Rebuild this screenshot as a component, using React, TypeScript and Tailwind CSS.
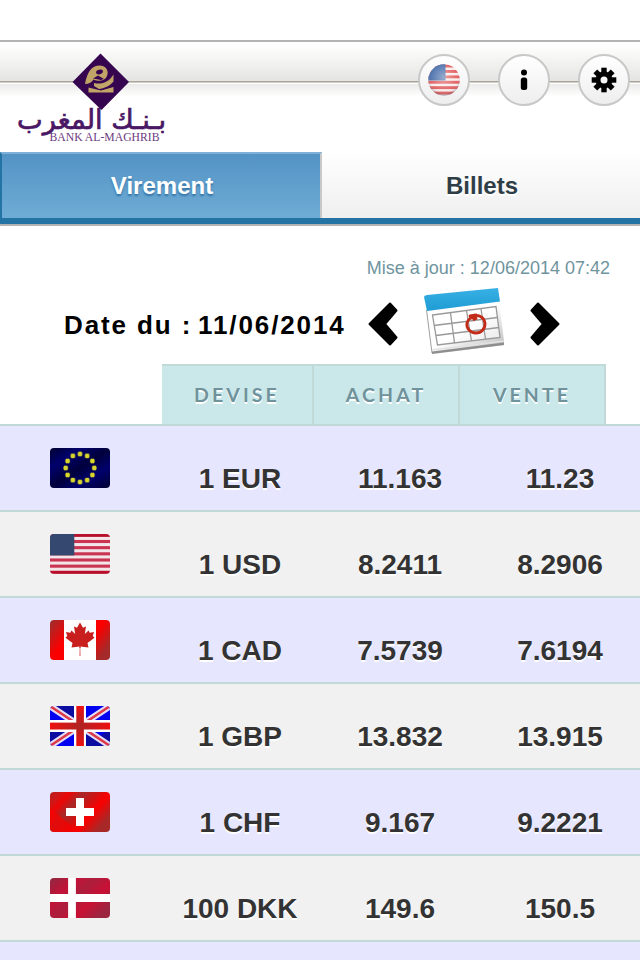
import type { ReactNode } from "react";

type Rate = {
  code: string;
  buy: string;
  sell: string;
  flag: ReactNode;
};

/* étoiles du drapeau européen, réparties sur une ellipse */
const stars = Array.from({ length: 12 }, (_, i) => {
  const a = (i * Math.PI) / 6;
  return { x: 30 + Math.sin(a) * 14.3, y: 20 - Math.cos(a) * 14 };
});

const EuFlag = () => (
  <>
    <defs>
      <linearGradient id="eu" x1="0" y1="0" x2="1" y2="1">
        <stop offset="0" stopColor="#000030" />
        <stop offset="0.25" stopColor="#00006c" />
        <stop offset="0.5" stopColor="#00003c" />
        <stop offset="0.72" stopColor="#00006c" />
        <stop offset="1" stopColor="#000030" />
      </linearGradient>
    </defs>
    <rect width="60" height="40" fill="url(#eu)" />
    {stars.map((s, i) => (
      <g key={i} fill="#d8d62c">
        <rect x={s.x - 2.5} y={s.y - 1.5} width="5" height="3" opacity="0.7" />
        <rect x={s.x - 1.7} y={s.y - 2.3} width="3.4" height="4.6" />
      </g>
    ))}
  </>
);

const UsFlag = () => (
  <>
    <rect width="60" height="40" fill="#f3e6ea" />
    {[0, 1, 2, 3, 4, 5, 6].map((i) => (
      <rect key={i} y={i * 6.16 - 0.2} width="60" height="3.1" fill={i % 6 ? "#c93452" : "#b8102c"} />
    ))}
    <rect width="24.3" height="21.4" fill="#35486f" />
  </>
);

const CaFlag = () => (
  <>
    <defs>
      <linearGradient id="ca1" x1="0" y1="0" x2="0.5" y2="1">
        <stop offset="0.1" stopColor="#a52a2a" />
        <stop offset="0.8" stopColor="#fa0000" />
      </linearGradient>
      <linearGradient id="ca2" x1="0.2" y1="0" x2="0.7" y2="1">
        <stop offset="0.2" stopColor="#fa0000" />
        <stop offset="0.8" stopColor="#a52a2a" />
      </linearGradient>
    </defs>
    <rect width="60" height="40" fill="#fff" />
    <rect width="14" height="40" fill="url(#ca1)" />
    <rect x="46" width="14" height="40" fill="url(#ca2)" />
    <path
      d="M30 2.5L33 7.8L36 6.5L34.8 14L38.5 10.5L39.7 12.8L44 12L42.8 16L44.5 17.7L37.5 23L38.5 27.5L30.6 26.5L31 36H29L29.4 26.5L21.5 27.5L22.5 23L15.5 17.7L17.2 16L16 12L20.3 12.8L21.5 10.5L25.2 14L24 6.5L27 7.8Z"
      fill="#c81e1e"
    />
    <rect x="28.5" y="28" width="3" height="8" fill="#fff" opacity="0.6" />
  </>
);

const GbFlag = () => (
  <>
    <defs>
      <linearGradient id="gbh">
        <stop offset="0" stopColor="#ee1010" />
        <stop offset="0.5" stopColor="#b02424" />
        <stop offset="1" stopColor="#ee1010" />
      </linearGradient>
      <linearGradient id="gbv" x2="0" y2="1">
        <stop offset="0" stopColor="#ee1010" />
        <stop offset="0.5" stopColor="#b02424" />
        <stop offset="1" stopColor="#ee1010" />
      </linearGradient>
    </defs>
    <rect width="60" height="40" fill="#0000f0" />
    <path d="M0 0H30V14H20ZM60 40H30V26H40ZM0 40V23H24ZM60 23V40H36Z" fill="#0c0ca0" />
    <path d="M0 40H26V24ZM34 16L60 0V16Z" fill="#0000f0" />
    <path d="M0 0L60 40M60 0L0 40" stroke="#e4dcf4" strokeWidth="6.5" />
    <path d="M0 0L60 40M60 0L0 40" stroke="#dc3848" strokeWidth="2.4" />
    <path d="M30 0V40M0 20H60" stroke="#fff" strokeWidth="12" />
    <rect x="26.3" width="7.6" height="40" fill="url(#gbv)" />
    <rect y="16.6" width="60" height="6.9" fill="url(#gbh)" />
  </>
);

const ChFlag = () => (
  <>
    <defs>
      <linearGradient id="ch" x1="0" y1="0" x2="1" y2="0.6">
        <stop offset="0" stopColor="#b82020" />
        <stop offset="0.15" stopColor="#d01616" />
        <stop offset="0.25" stopColor="#ec0606" />
        <stop offset="0.42" stopColor="#a82828" />
        <stop offset="0.6" stopColor="#d01212" />
        <stop offset="0.75" stopColor="#fa0000" />
        <stop offset="1" stopColor="#a82828" />
      </linearGradient>
    </defs>
    <rect width="60" height="40" fill="url(#ch)" />
    <path d="M0 16V40H32L22 34Z" fill="#f80000" opacity="0.7" />
    <path d="M26 6H34V16H44V24H34V34H26V24H16V16H26Z" fill="#fff" />
  </>
);

const DkFlag = () => (
  <>
    <defs>
      <linearGradient id="dk" x1="0" y1="0" x2="1" y2="0.7">
        <stop offset="0" stopColor="#8e2840" />
        <stop offset="0.3" stopColor="#c41238" />
        <stop offset="0.5" stopColor="#ac1e3c" />
        <stop offset="0.75" stopColor="#c81034" />
        <stop offset="1" stopColor="#9c2640" />
      </linearGradient>
    </defs>
    <rect width="60" height="40" fill="url(#dk)" />
    <path d="M22 0V40M0 20H60" stroke="#fff" strokeWidth="7.8" />
  </>
);

const rates: Rate[] = [
  { code: "1 EUR", buy: "11.163", sell: "11.23", flag: <EuFlag /> },
  { code: "1 USD", buy: "8.2411", sell: "8.2906", flag: <UsFlag /> },
  { code: "1 CAD", buy: "7.5739", sell: "7.6194", flag: <CaFlag /> },
  { code: "1 GBP", buy: "13.832", sell: "13.915", flag: <GbFlag /> },
  { code: "1 CHF", buy: "9.167", sell: "9.2221", flag: <ChFlag /> },
  { code: "100 DKK", buy: "149.6", sell: "150.5", flag: <DkFlag /> },
];

function Logo() {
  return (
    <svg width="180" height="110" viewBox="0 42 180 110" className="shrink-0 overflow-visible">
      <path d="M100.5 53.5L129 82L101.5 110L72.5 82Z" fill="#36054f" />
      {/* monogramme doré */}
      <path
        d="M85 84C87 74 90 66 99 65.500C107 65.500 109.500 72 106.500 77C104 81 98 82 93.500 79.500C92 82 89 84 85 84Z"
        fill="#c0a468"
      />
      <ellipse cx="99.500" cy="72" rx="3.500" ry="2.200" fill="#36054f" transform="rotate(-15 99.500 72)" />
      <path d="M93 78.500L98 75.500L104 79L101 80Z" fill="#36054f" />
      <path d="M94 83C102 85 109 82 113.500 74.500V81.500C110 86 104 88.500 99 89L94 86Z" fill="#c0a468" />
      <path d="M88.500 87.500L101 90.500L113.500 87V92.500H88.500Z" fill="#c0a468" />
      <text
        x="17"
        y="129"
        textLength="149"
        lengthAdjust="spacingAndGlyphs"
        direction="ltr"
        fontSize="27"
        fill="#4a1765"
        stroke="#4a1765"
        strokeWidth="0.7"
        className="font-['DejaVu_Sans',sans-serif]"
      >
        بـنـك المغرب
      </text>
      <text
        x="49.500"
        y="141"
        textLength="110"
        lengthAdjust="spacingAndGlyphs"
        fontSize="13.500"
        fill="#6b3a80"
        className="font-['Liberation_Serif',serif]"
      >
        BANK AL-MAGHRIB
      </text>
    </svg>
  );
}

function RoundButton({ label, children }: { label: string; children: ReactNode }) {
  return (
    <button
      aria-label={label}
      className="flex size-[52px] items-center justify-center rounded-full border-2 border-[#c8c8c8] bg-linear-to-b from-white to-[#eeeeee]"
    >
      {children}
    </button>
  );
}

function RoundFlag() {
  return (
    <svg width="32" height="32" viewBox="0 0 32 32">
      <defs>
        <clipPath id="disc">
          <circle cx="16" cy="16" r="15.700" />
        </clipPath>
        <radialGradient id="shine" cx="0.5" cy="0.42" r="0.58">
          <stop offset="0" stopColor="#fff" stopOpacity="0.45" />
          <stop offset="0.75" stopColor="#fff" stopOpacity="0.1" />
          <stop offset="1" stopColor="#3c3c50" stopOpacity="0.45" />
        </radialGradient>
      </defs>
      <g clipPath="url(#disc)">
        <rect width="32" height="32" fill="#f6ecea" />
        {[0, 1, 2, 3, 4, 5].map((i) => (
          <rect key={i} y={i * 5.4 + 0.6} width="32" height="2.900" fill="#df5254" />
        ))}
        <rect width="17.500" height="16.500" fill="#3f66a6" />
        <rect width="32" height="32" fill="url(#shine)" />
      </g>
    </svg>
  );
}

function Calendar() {
  return (
    <svg width="80" height="66" viewBox="0 0 80 66">
      <defs>
        <linearGradient id="paper" x1="0" y1="0" x2="1" y2="1">
          <stop offset="0.5" stopColor="#fff" />
          <stop offset="1" stopColor="#b4b4b4" />
        </linearGradient>
        <linearGradient id="band" x2="0" y2="1">
          <stop offset="0" stopColor="#38b0e4" />
          <stop offset="1" stopColor="#1e9cd4" />
        </linearGradient>
      </defs>
      <path d="M2 22L75 13L80 53V57L8 66Z" fill="url(#paper)" />
      <path d="M2.500 22L8 65" stroke="#a0a0a0" fill="none" />
      <path d="M8 63.500L80 54.500V57L8 66Z" fill="#8e8e8e" />
      <path d="M8 62L80 53" stroke="#e2e2e2" strokeWidth="1.500" />
      <path d="M0 9Q0 7.500 3 7L74 0L76 13.500L3 23Z" fill="url(#band)" />
      {/* grille des jours */}
      <g fill="none" stroke="#999" strokeWidth="1.300">
        <path d="M8.500 27L72 18.500L76 49.500L13.500 57Z" fill="#fff" fillOpacity="0.6" />
        <path d="M10 37.500L73.500 29.500M12 47.500L75 39.500M26.500 25L30.500 55M42.500 22.500L47.500 53M57 20.500L61.500 51" />
      </g>
      <path
        d="M49 28C54 26.500 60 28.500 61 35C61.500 41 57 45 52 45C46 45 42 40 43 35C44 30.500 48 28.500 52 30.500M46 28L52 27L50 31.500"
        fill="none"
        stroke="#c32a18"
        strokeWidth="2.800"
        strokeLinecap="round"
        strokeLinejoin="round"
      />
    </svg>
  );
}

function Chevron({ flip = false }: { flip?: boolean }) {
  return (
    <svg width="30" height="46" viewBox="0 0 30 46" className={flip ? "-scale-x-100" : ""}>
      <path
        d="M1.500 23L22 2.500L28.500 9.500L17 23L28.500 36.500L22 43.500Z"
        fill="#000"
        stroke="#000"
        strokeWidth="2"
        strokeLinejoin="round"
      />
    </svg>
  );
}

export default function App() {
  return (
    <div className="flex h-[960px] w-[640px] flex-col overflow-hidden bg-white pt-10 font-['Liberation_Sans',Arial,sans-serif]">
      {/* BARRE DU HAUT */}
      <header className="flex h-28 shrink-0 items-start justify-between border-t-2 border-[#b3b3b3] bg-[linear-gradient(to_bottom,#ffffff_0px,#fafaf9_10px,#e4e4e2_39px,#a9a69f_39px,#a9a69f_40px,#d2cdc0_40px,#d2cdc0_41px,#ffffff_41px,#ffffff_42px,#ebebea_42px,#ffffff_55px)] pr-2.5">
        <Logo />
        <div className="flex gap-7 pt-3">
          <RoundButton label="Langue">
            <RoundFlag />
          </RoundButton>
          <RoundButton label="Informations">
            <svg width="8" height="22" viewBox="0 0 8 22">
              <circle cx="4" cy="3.500" r="3" />
              <rect x="0.800" y="8.500" width="6.400" height="12.500" rx="2.500" />
            </svg>
          </RoundButton>
          <RoundButton label="Réglages">
            <svg width="26" height="26" viewBox="-13 -13 26 26">
              {[0, 45, 90, 135].map((a) => (
                <rect key={a} x="-2.700" y="-12.300" width="5.400" height="24.600" transform={`rotate(${a})`} />
              ))}
              <circle r="8.500" />
              <circle r="3.500" fill="#f7f7f7" />
            </svg>
          </RoundButton>
        </div>
      </header>

      {/* ONGLETS */}
      <nav className="flex h-[74px] shrink-0 border-b-2 border-[#b3b3b3] text-2xl font-bold">
        <div className="flex flex-1 border-b-6 border-[#2373a5]">
          <div className="flex w-[322px] items-center justify-center border-t-2 border-r-2 border-l-2 border-t-[#7fb0da] border-r-[#c8c8c8] border-l-[#2373a5] bg-linear-to-b from-[#5393c5] to-[#6facd5] pl-0.5 text-white [text-shadow:0_2px_2px_#3373a5]">
            Virement
          </div>
          <div className="flex flex-1 items-center justify-center bg-linear-to-b from-white to-[#efefef] pt-0.5 pl-0.5 text-[#2f3e46] [text-shadow:0_2px_0_#ffffff]">
            Billets
          </div>
        </div>
      </nav>

      <p className="mt-[31px] pr-[30px] text-right text-[18px] leading-[22px] text-[#6f949e]">
        Mise à jour : 12/06/2014 07:42
      </p>

      {/* SÉLECTEUR DE DATE */}
      <div className="mt-[9px] flex h-[66px] items-center pl-16 text-[26px] font-bold text-black">
        <span className="w-[134px] pt-2 tracking-[1.9px] whitespace-nowrap">Date du :</span>
        <span className="w-[170px] pt-2 tracking-[1.9px]">11/06/2014</span>
        <div className="flex items-center">
          <div className="mt-1.5 mr-[26px]">
            <Chevron />
          </div>
          <Calendar />
          <div className="mt-1.5 ml-[26px]">
            <Chevron flip />
          </div>
        </div>
      </div>

      {/* TAUX DE CHANGE */}
      <div className="mt-2.5 flex h-15 shrink-0 pl-[162px] font-['Lato',sans-serif] text-[19.5px] font-bold tracking-[3.1px] text-[#6f929b] [text-shadow:0_2px_0_#ffffff]">
        <div className="flex w-[152px] items-center justify-center border-t-2 border-r-2 border-[#c1dad7] bg-[#cae8ea]">DEVISE</div>
        <div className="flex w-[146px] items-center justify-center border-t-2 border-r-2 border-[#c1dad7] bg-[#cae8ea]">ACHAT</div>
        <div className="flex w-[146px] items-center justify-center border-t-2 border-r-2 border-[#c1dad7] bg-[#cae8ea]">VENTE</div>
      </div>
      <div className="border-t-2 border-[#c1dad7] text-[28px] font-bold text-[#333333] [text-shadow:0_2px_0_#ffffff]">
        {rates.map((r) => (
          <div
            key={r.code}
            className="grid h-[86px] grid-cols-4 border-b-2 border-[#c1dad7] text-center leading-[106px] odd:bg-[#e6e6ff] even:bg-[#f1f1f1]"
          >
            <div className="flex justify-center pt-[22px]">
              <svg width="60" height="40" viewBox="0 0 60 40" className="rounded-[4px]">
                {r.flag}
              </svg>
            </div>
            <div>{r.code}</div>
            <div>{r.buy}</div>
            <div>{r.sell}</div>
          </div>
        ))}
        <div className="h-[86px] bg-[#e6e6ff]" />
      </div>
    </div>
  );
}
